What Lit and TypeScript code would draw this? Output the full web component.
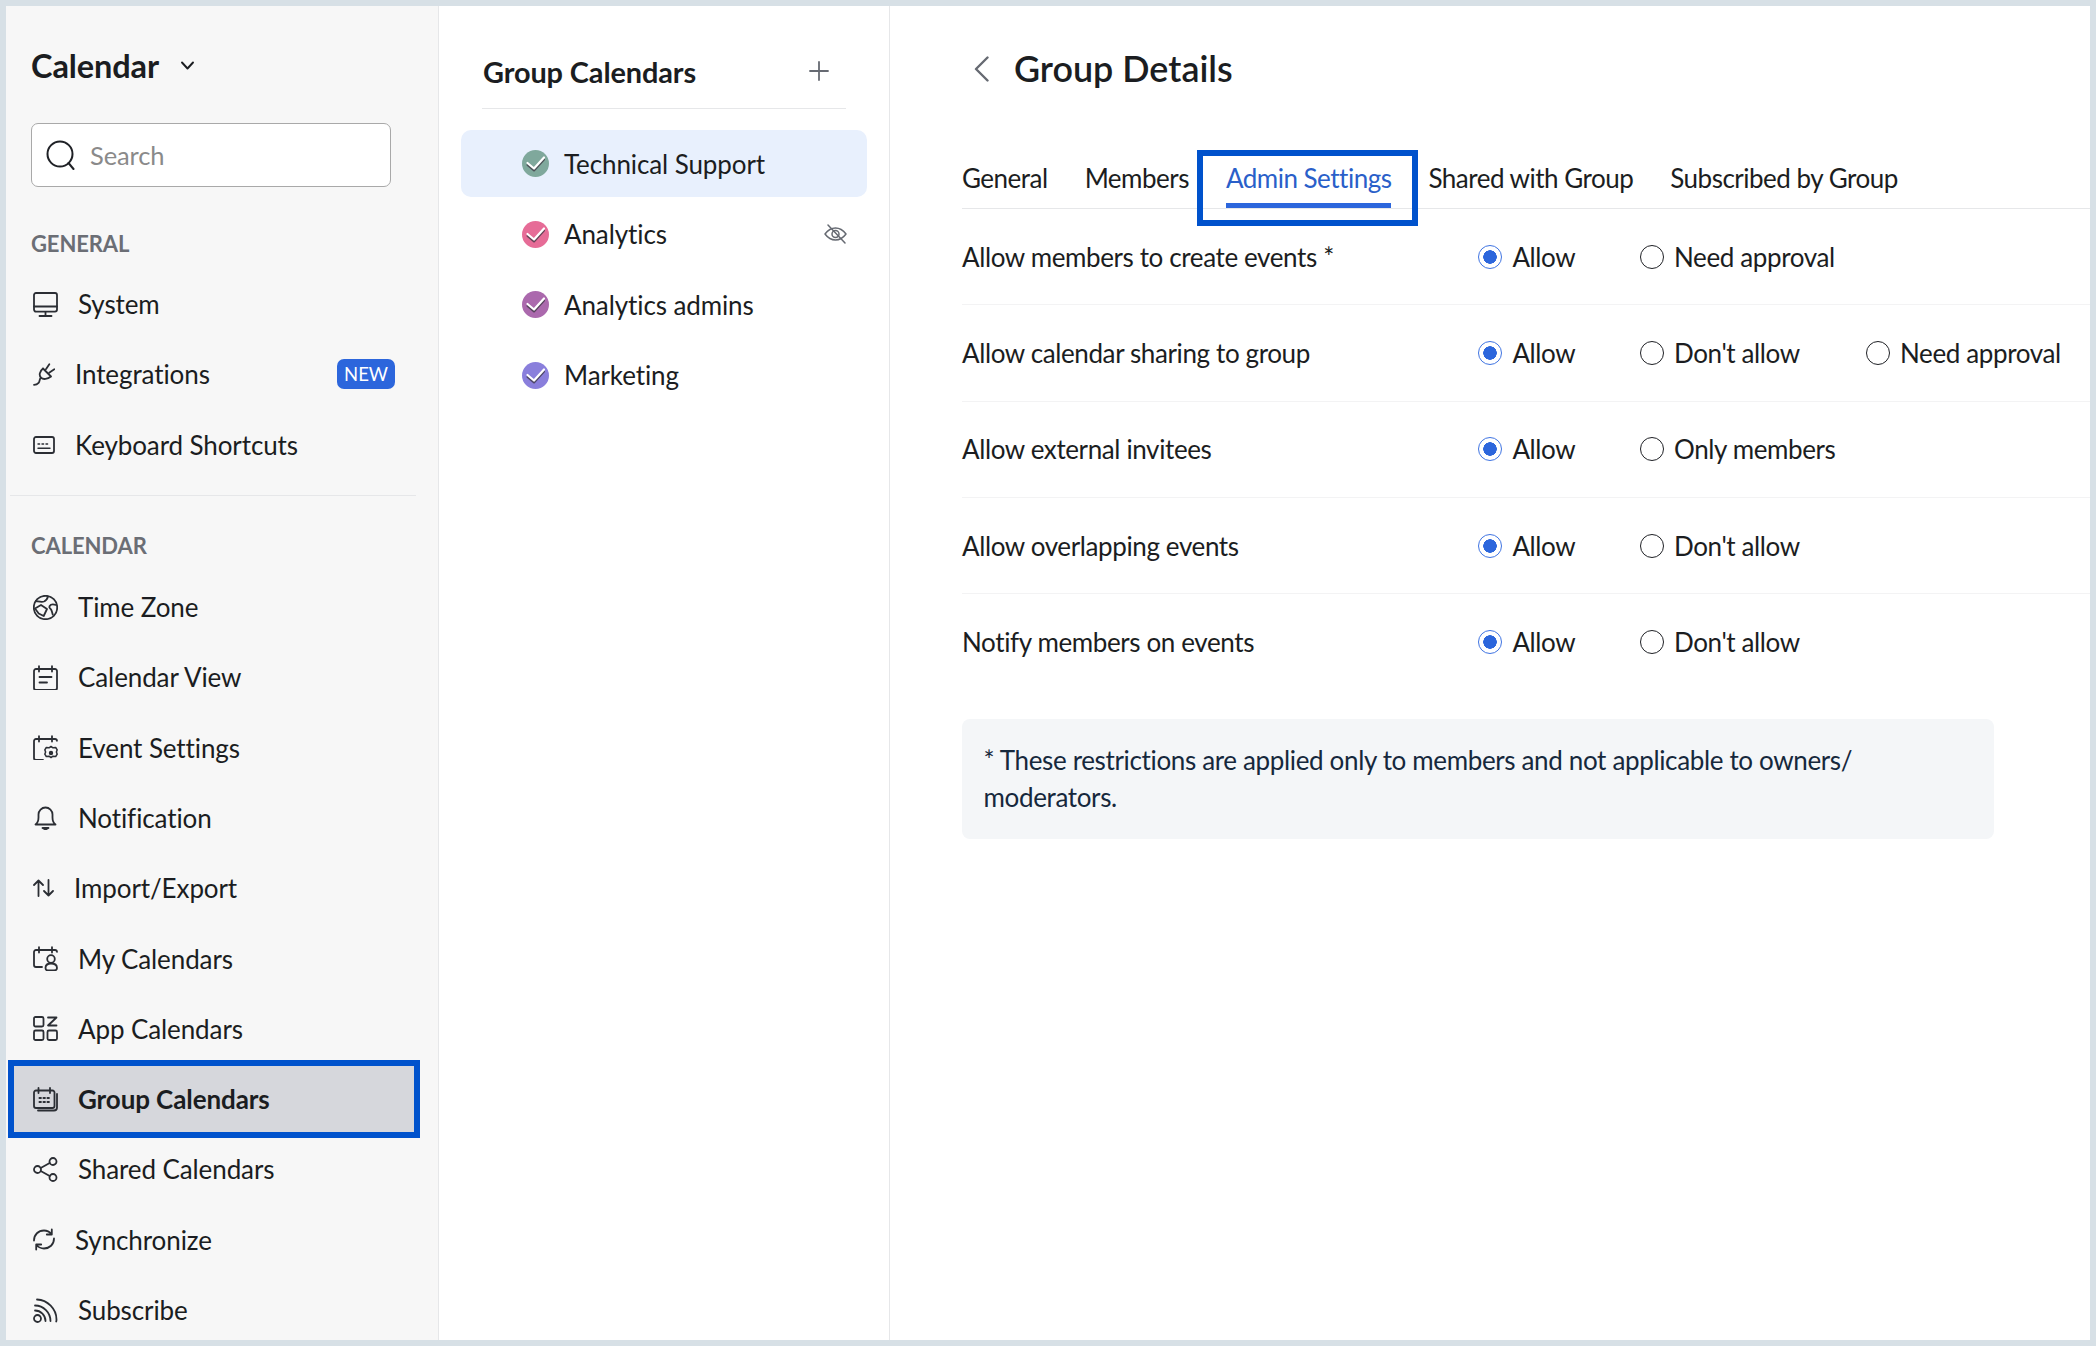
import { LitElement, html, css, svg } from "lit";
import { customElement } from "lit/decorators.js";
import { classMap } from "lit/directives/class-map.js";

const calTop = svg`<path d="M6 4H3a2 2 0 0 0-2 2v17a2 2 0 0 0 2 2h19a2 2 0 0 0 2-2V6a2 2 0 0 0-2-2h-3M6 1.2V6.5M19 1.2V6.5M6 4h13"/>`;

const icon = (w: number, h: number, body: unknown) => html`<svg class="ico" width=${w} height=${h} viewBox="0 0 ${w} ${h}" fill="none" stroke="currentColor" stroke-width="1.8" stroke-linecap="round" stroke-linejoin="round">${body}</svg>`;

const icons: Record<string, unknown> = {
  system: icon(25, 25, svg`<rect x="1" y="1" width="23" height="18.6" rx="2"/><path d="M1 14.5h23M12.5 20v4M6.5 24h12"/>`),
  plug: icon(22, 23, svg`<path d="M10 5.5l8 8M16.3 1.3l-3.2 4.8M21.3 6.3l-4.8 3.2M10 5.5c-3.6 3-4.2 7-2 9.2 2.2 2.2 6.5 1.5 10-1.2M8 14.7c-2 1.6-.8 3.4-2.4 5.1-1.2 1.3-2.7 1.9-4.6 2"/>`),
  keyboard: icon(22, 18, svg`<rect x="1" y="1" width="20" height="16" rx="2"/><path d="M5 8h1.6M9 8h1.6M13 8h1.6M5 12.3h12" stroke-width="1.4"/>`),
  globe: icon(25, 25, svg`<circle cx="12.5" cy="12.5" r="11.7"/><path d="M3 6c3 .5 5.5 1.3 8 .5 2-.7 3.5-3.2 4-5M2 13.5l6-3.5 6 4-3.300 7-5-2.500zM23 10c-2.500-.8-5.500-.5-6.500 1.200-1 1.700 1 2.300 1.800 3.800.8 1.500 1 3.500 1.500 4.500"/>`),
  calview: icon(25, 25, svg`${calTop}<path d="M6.5 12h12M6.5 17.5h7.5"/>`),
  eventset: icon(25, 25, svg`<path d="M6 4H3a2 2 0 0 0-2 2v17a2 2 0 0 0 2 2h7M6 1.2V6.5M19 1.2V6.5M6 4h13M19 4h3a2 2 0 0 1 2 1.8"/><path stroke-width="1.5" d="M18 11.5l2 1.300 2.700-.3 1.500 2.300-.8 2.200.8 2.200-1.500 2.300-2.700-.3-2 1.300-2-1.300-2.700.3-1.500-2.300.8-2.200-.8-2.200 1.500-2.300 2.700.3z"/><circle cx="18" cy="18" r="1.300" fill="currentColor"/>`),
  bell: icon(25, 25, svg`<path d="M2.5 19.5h20c-2-1.500-3-3.500-3-7v-3a7 7 0 0 0-14 0v3c0 3.500-1 5.500-3 7z"/><path d="M9.500 23h6l-3 1.500z" fill="currentColor"/>`),
  transfer: icon(21, 18, svg`<path d="M5.500 17V1.500M1 6l4.500-4.500L10 6M15.500 1v15.500M11 12l4.500 4.500L20 12"/>`),
  mycal: icon(25, 25, svg`<path d="M6 4H3a2 2 0 0 0-2 2v13a2 2 0 0 0 2 2h6M6 1.200V6.500M19 1.200V6.500M6 4h13M19 4h3a2 2 0 0 1 2 1.800"/><circle cx="18" cy="13" r="3.800"/><path d="M12.500 22c0-3 2-4.500 5.500-4.500s6 1.500 6 4.500c0 1.800-1.500 2.500-3 2.500h-6c-1.500 0-2.500-1-2.500-2.500z"/>`),
  apps: icon(25, 25, svg`<rect x="1" y="1" width="9.500" height="9.500" rx="1.500"/><rect x="1" y="14.500" width="9.500" height="9.500" rx="1.500"/><rect x="14.500" y="14.500" width="9.500" height="9.500" rx="1.500"/><path d="M15 1.500h8.500L15 9.500h8.500"/>`),
  groupcal: icon(25, 25, svg`<path d="M5.500 3.500H3a2 2 0 0 0-2 2V19a2 2 0 0 0 2 2h16.500a2 2 0 0 0 2-2V5.500a2 2 0 0 0-2-2H17M5.500 1v5M17 1v5M5.500 3.500H17"/><path d="M24 7v13.500a3 3 0 0 1-3 3H5"/><path d="M6.500 11h1.400M10.500 11h1.400M14.500 11h1.400M6.500 15h1.400M10.500 15h1.400M14.500 15h1.400" stroke-width="2"/>`),
  share: icon(25, 25, svg`<circle cx="4.500" cy="12.500" r="3.500"/><circle cx="20" cy="4.500" r="3.500"/><circle cx="20" cy="20.500" r="3.500"/><path d="M7.700 11l9-5M7.700 14l9 5"/>`),
  sync: icon(22, 23, svg`<path d="M1 12.500C1 6.500 5.500 2.500 11 2.500c3 0 5.500 1.200 7.500 3.500M18.800 1.500V6.500h-5M21 10.500c0 6-4.500 10-10 10-3 0-5.500-1.200-7.500-3.500M3.200 21.500V16.500h5"/>`),
  rss: icon(25, 25, svg`<circle cx="4.500" cy="20.500" r="3.500"/><path d="M2 12.500a10.500 10.500 0 0 1 10.500 10.500M2 7.500A15.500 15.500 0 0 1 17.500 23M4 1.500C14.500 1.800 23.500 11 23.500 21.500c0 1 0 1.500-.3 2"/>`),
};

const general = [
  { label: "System", icon: "system" },
  { label: "Integrations", icon: "plug", badge: "NEW" },
  { label: "Keyboard Shortcuts", icon: "keyboard" },
];

const calendar = [
  { label: "Time Zone", icon: "globe" },
  { label: "Calendar View", icon: "calview" },
  { label: "Event Settings", icon: "eventset" },
  { label: "Notification", icon: "bell" },
  { label: "Import/Export", icon: "transfer" },
  { label: "My Calendars", icon: "mycal" },
  { label: "App Calendars", icon: "apps" },
  { label: "Group Calendars", icon: "groupcal", active: true },
  { label: "Shared Calendars", icon: "share" },
  { label: "Synchronize", icon: "sync" },
  { label: "Subscribe", icon: "rss" },
];

const groups = [
  { name: "Technical Support", color: "#7fa89c", selected: true },
  { name: "Analytics", color: "#e66c97", hidden: true },
  { name: "Analytics admins", color: "#ab69ad" },
  { name: "Marketing", color: "#8a7fdc" },
];

const tabs = ["General", "Members", "Admin Settings", "Shared with Group", "Subscribed by Group"];

const settings = [
  { label: "Allow members to create events *", options: ["Allow", "Need approval"] },
  { label: "Allow calendar sharing to group", options: ["Allow", "Don't allow", "Need approval"] },
  { label: "Allow external invitees", options: ["Allow", "Only members"] },
  { label: "Allow overlapping events", options: ["Allow", "Don't allow"] },
  { label: "Notify members on events", options: ["Allow", "Don't allow"] },
];

@customElement("app-root")
export class AppRoot extends LitElement {
  static styles = css`
    :host {
      display: flex;
      box-sizing: border-box;
      width: 2096px;
      height: 1346px;
      padding: 6px;
      overflow: hidden;
      background: #d7e0e6;
      font-family: Lato, "Noto Sans", sans-serif;
      font-size: 26px;
      letter-spacing: -0.1px;
      color: #1b1d21;
    }
    .sidebar {
      flex: 0 0 433px;
      box-sizing: border-box;
      background: #f7f7f7;
      border-right: 1px solid #e6e7e9;
      overflow: hidden;
    }
    .brand {
      display: flex;
      align-items: center;
      gap: 22px;
      margin: 39px 0 0 25px;
      height: 40px;
      font-size: 32.5px;
      font-weight: 700;
    }
    .search {
      display: flex;
      align-items: center;
      gap: 15px;
      box-sizing: border-box;
      width: 360px;
      height: 64px;
      margin: 38px 0 0 25px;
      padding-left: 14px;
      background: #fff;
      border: 1px solid #a9a9a9;
      border-radius: 7px;
      color: #8a8a8a;
      font-size: 25.5px;
    }
    .section {
      margin: 43px 0 11px 25px;
      height: 28px;
      line-height: 28px;
      font-size: 22px;
      font-weight: 700;
      color: #6b6e75;
    }
    .section.second {
      margin: 36px 0 12px 25px;
    }
    .nav-row {
      position: relative;
      isolation: isolate;
      display: flex;
      align-items: center;
      gap: 20px;
      height: 70.3px;
      padding: 0 43px 0 27px;
    }
    .nav-row .ico {
      flex: none;
      color: #2b2e34;
    }
    .nav-row.active {
      font-weight: 700;
    }
    .nav-row.active::before {
      content: "";
      position: absolute;
      z-index: -1;
      left: 2px;
      top: -4px;
      width: 412px;
      height: 78px;
      box-sizing: border-box;
      background: #d6d7dc;
      border: 6px solid #0052cc;
    }
    .badge {
      margin-left: auto;
      padding: 0 7px;
      height: 30px;
      line-height: 30px;
      border-radius: 7px;
      background: #2c66dc;
      color: #fff;
      font-size: 18.5px;
      letter-spacing: 0;
    }
    .rule {
      height: 1px;
      margin: 15px 22px 0 4px;
      background: #e6e7e9;
    }
    .groups {
      flex: 0 0 451px;
      box-sizing: border-box;
      background: #fff;
      border-right: 1px solid #e6e7e9;
    }
    .groups-head {
      display: flex;
      align-items: center;
      justify-content: space-between;
      margin: 0 43px;
      padding: 47px 17px 19px 1px;
      height: 36px;
      box-sizing: content-box;
      border-bottom: 1px solid #e6e7e9;
      font-size: 28.9px;
      font-weight: 700;
    }
    .plus {
      color: #666a72;
    }
    .group-list {
      display: flex;
      flex-direction: column;
      gap: 3.5px;
      margin: 21px 22px 0;
    }
    .group {
      display: flex;
      align-items: center;
      gap: 15px;
      height: 67px;
      padding: 0 20px 0 61px;
      border-radius: 10px;
    }
    .group.selected {
      background: #e8f0fd;
    }
    .eye {
      margin-left: auto;
      color: #666a72;
    }
    .details {
      flex: 1;
      min-width: 0;
      padding-left: 72px;
      background: #fff;
      letter-spacing: -0.38px;
    }
    .details-head {
      display: flex;
      align-items: center;
      gap: 25px;
      height: 124px;
      padding-left: 12px;
      font-size: 35.9px;
      font-weight: 600;
      letter-spacing: 0;
    }
    .back {
      margin-top: 2px;
      color: #666a72;
    }
    .tabs {
      display: flex;
      gap: 37px;
      height: 78px;
      border-bottom: 1px solid #e6e7e9;
      letter-spacing: -0.5px;
    }
    .tab {
      position: relative;
      padding-top: 32px;
      line-height: 32px;
      height: 46px;
    }
    .tab.on {
      color: #2a5fc9;
      border-bottom: 5px solid #2c66dc;
      height: 41px;
    }
    .tab.on::before {
      content: "";
      position: absolute;
      left: -29px;
      right: -27px;
      top: 20px;
      height: 76px;
      box-sizing: border-box;
      border: 6px solid #0052cc;
    }
    .row {
      display: grid;
      grid-template-columns: 516.4px 161.6px 226px auto;
      align-items: center;
      box-sizing: border-box;
      height: 96.3px;
      border-bottom: 1px solid #f3f3f4;
    }
    .row.last {
      border-bottom: 0;
    }
    .opt {
      display: flex;
      align-items: center;
      gap: 10px;
      white-space: nowrap;
    }
    .radio {
      flex: none;
      box-sizing: border-box;
      width: 24px;
      height: 24px;
      border: 1.8px solid #1f2126;
      border-radius: 50%;
    }
    .radio.on {
      border-color: #3f74e2;
      background: radial-gradient(circle, #2c66dc 0 6.5px, #fff 7px);
    }
    .note {
      box-sizing: border-box;
      width: 1032px;
      margin-top: 29px;
      padding: 23px 22px 23px 21.5px;
      background: #f4f6f8;
      border-radius: 8px;
      line-height: 37px;
      color: #16283c;
      letter-spacing: -0.35px;
    }
  `;

  navRow(item: { label: string; icon: string; badge?: string; active?: boolean }) {
    return html`<div class=${classMap({ "nav-row": true, active: !!item.active })}>
      ${icons[item.icon]}<span>${item.label}</span>
      ${item.badge ? html`<span class="badge">${item.badge}</span>` : ""}
    </div>`;
  }

  render() {
    return html`
      <aside class="sidebar">
        <div class="brand">
          <span>Calendar</span>
          <svg width="13" height="9" viewBox="0 0 13 9" fill="none" stroke="#1b1d21" stroke-width="1.9" stroke-linecap="round" stroke-linejoin="round"><path d="M1 1.5l5.500 6 5.500-6"/></svg>
        </div>
        <div class="search">
          <svg width="29" height="30" viewBox="0 0 29 30" fill="none" stroke="#1f2126" stroke-width="2" stroke-linecap="round"><circle cx="14" cy="14" r="12.500"/><path d="M22.500 23l5 6"/></svg>
          <span>Search</span>
        </div>
        <div class="section">GENERAL</div>
        ${general.map((i) => this.navRow(i))}
        <div class="rule"></div>
        <div class="section second">CALENDAR</div>
        ${calendar.map((i) => this.navRow(i))}
      </aside>

      <section class="groups">
        <div class="groups-head">
          <span>Group Calendars</span>
          <svg class="plus" width="20" height="20" viewBox="0 0 20 20" fill="none" stroke="currentColor" stroke-width="1.8" stroke-linecap="round"><path d="M10 1v18M1 10h18"/></svg>
        </div>
        <div class="group-list">
          ${groups.map(
            (g) => html`<div class=${classMap({ group: true, selected: !!g.selected })}>
              <svg width="27" height="27" viewBox="0 0 27 27" fill="none" stroke-linecap="round" stroke-linejoin="round">
                <circle cx="13.5" cy="13.5" r="13.5" fill=${g.color}/>
                <path d="M5.5 15l6.500 5.500L22 9.500" stroke="#3a3440" stroke-opacity=".75" stroke-width="2"/>
                <path d="M5.5 13l6.500 5.500L22 7.500" stroke="#fff" stroke-width="2.2"/>
              </svg>
              <span>${g.name}</span>
              ${g.hidden
                ? html`<svg class="eye" width="23" height="20" viewBox="0 0 23 20" fill="none" stroke="currentColor" stroke-width="1.5" stroke-linecap="round" stroke-linejoin="round"><path d="M1 10c3-4 6.500-6 10.500-6S19 6 22 10c-3 4-6.500 6-10.500 6S4 14 1 10z"/><circle cx="11.5" cy="10" r="3.5"/><path d="M4 1l17 18"/></svg>`
                : ""}
            </div>`
          )}
        </div>
      </section>

      <main class="details">
        <div class="details-head">
          <svg class="back" width="15" height="26" viewBox="0 0 15 26" fill="none" stroke="currentColor" stroke-width="2.4" stroke-linecap="round" stroke-linejoin="round"><path d="M13.5 1.5L2 13l11.500 11.500"/></svg>
          <span>Group Details</span>
        </div>
        <div class="tabs">
          ${tabs.map((t, i) => html`<div class=${classMap({ tab: true, on: i === 2 })}>${t}</div>`)}
        </div>
        ${settings.map(
          (s, n) => html`<div class=${classMap({ row: true, last: n === settings.length - 1 })}>
            <span>${s.label}</span>
            ${s.options.map(
              (o, i) => html`<label class="opt"><span class=${classMap({ radio: true, on: i === 0 })}></span>${o}</label>`
            )}
          </div>`
        )}
        <div class="note">* These restrictions are applied only to members and not applicable to owners/ moderators.</div>
      </main>
    `;
  }
}
